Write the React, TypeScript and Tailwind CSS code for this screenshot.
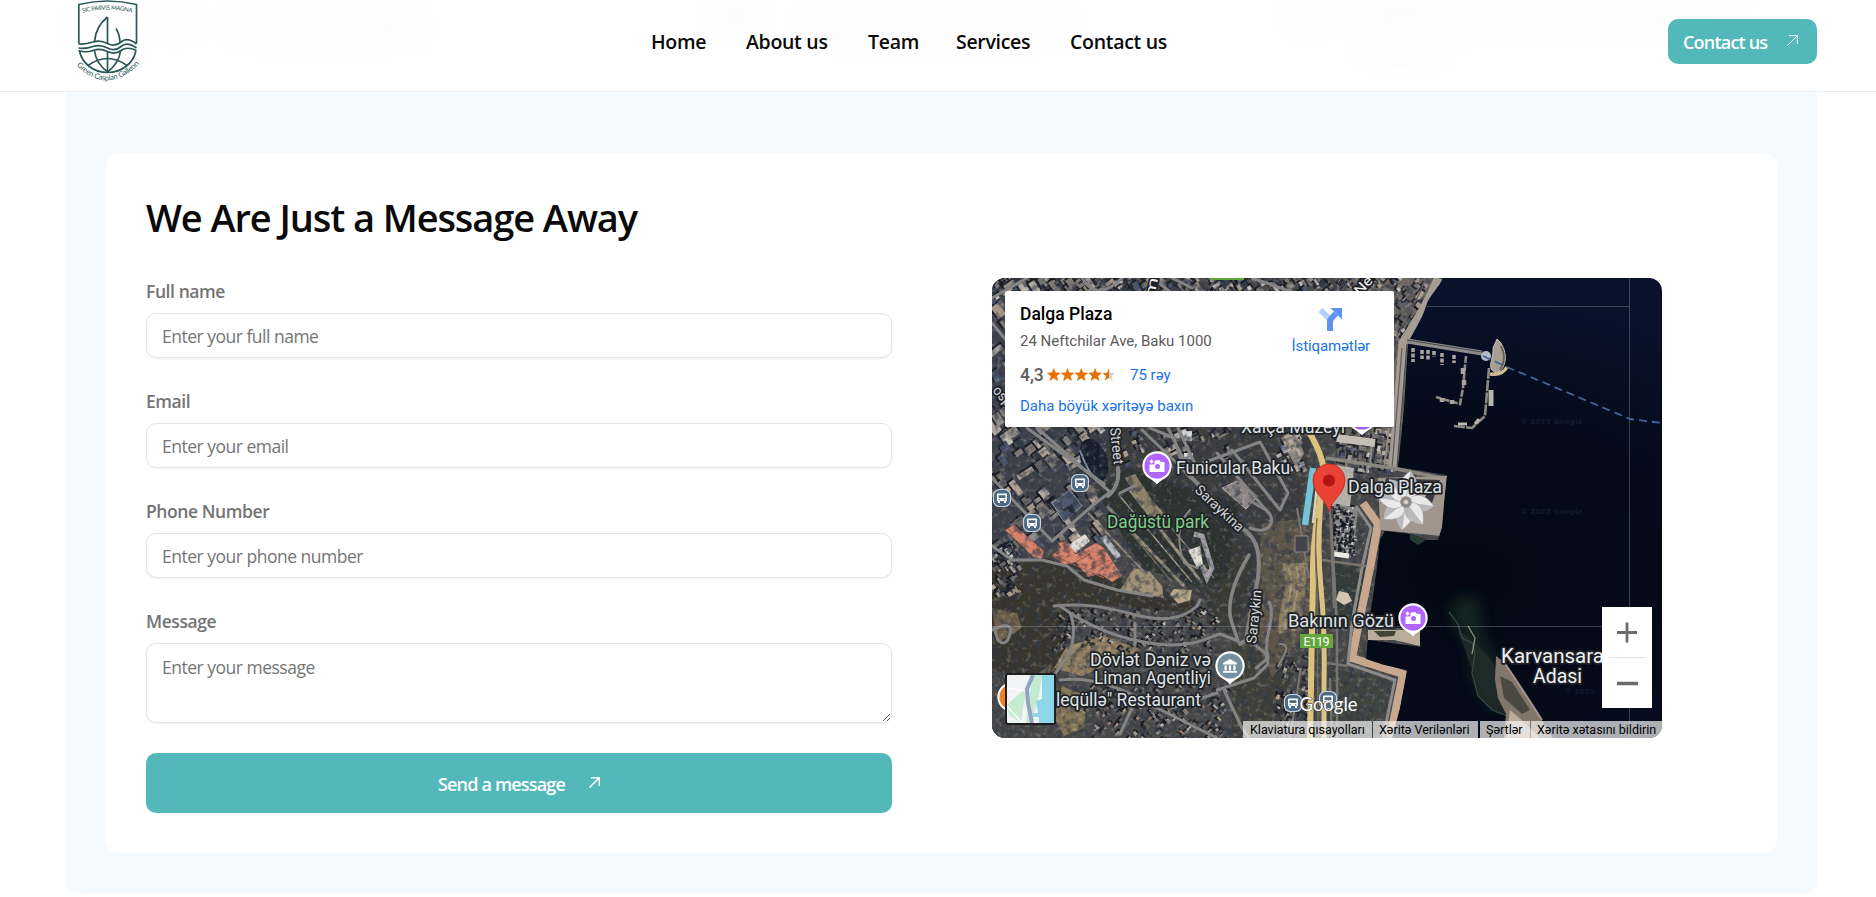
import React from "react";

const FONT = "font-['Open_Sans','Noto_Sans',sans-serif]";

function seeded(seed: number) {
  let s = seed;
  return () => {
    s = (s * 1664525 + 1013904223) % 4294967296;
    return s / 4294967296;
  };
}

type Block = { x: number; y: number; w: number; h: number; r: number; c: string };

const ROOFS = ["#a8a099", "#8d8780", "#cbc2b8", "#6f6c6c", "#b9aa9a", "#566078", "#ded8d2", "#7d7470", "#3c404e", "#938a7e", "#c9b7a5"];
const HOUSES = ["#9a938c", "#b8a892", "#7c746a", "#c9c3bb", "#b08a78", "#8b8678", "#6b6860"];

function makeBlocks(seed: number, n: number, x0: number, y0: number, x1: number, y1: number, min: number, max: number, angle: number, colors: string[]): Block[] {
  const rnd = seeded(seed);
  return Array.from({ length: n }, () => ({
    x: x0 + rnd() * (x1 - x0),
    y: y0 + rnd() * (y1 - y0),
    w: min + rnd() * (max - min),
    h: min * 0.7 + rnd() * (max - min) * 0.5,
    r: angle + (rnd() > 0.7 ? 90 : 0) + rnd() * 8,
    c: colors[Math.floor(rnd() * colors.length)],
  }));
}

const CITY = makeBlocks(7, 260, -5, -5, 330, 20, 3, 13, 50, ROOFS);
const CITY_WEST = makeBlocks(11, 170, -8, 15, 110, 262, 5, 18, 50, ROOFS);
const CITY_MID = makeBlocks(13, 34, 120, 150, 240, 185, 3, 11, 62, ROOFS);
const CITY_TOP = makeBlocks(19, 150, 330, -5, 440, 60, 3, 9, 35, ROOFS);
const EAST = makeBlocks(43, 70, 345, 150, 400, 190, 3, 9, 5, ROOFS);
const COAST_ROW = makeBlocks(47, 26, 290, 155, 312, 190, 4, 9, 60, ["#cfc2b0", "#e0d8cc", "#8c97ae", "#b9ab99"]);
const SLOPE = makeBlocks(23, 170, 62, 330, 225, 372, 2, 5, 30, HOUSES);
const SOUTH = makeBlocks(31, 110, 90, 405, 240, 460, 2, 7, 40, HOUSES);
const SOUTH_EAST = makeBlocks(33, 60, 285, 372, 318, 460, 2, 7, 20, ROOFS);
const WEST = makeBlocks(37, 60, 0, 262, 28, 315, 3, 8, 50, ROOFS);
const CAR_PARK = makeBlocks(51, 110, 343, 228, 363, 276, 1.5, 3.5, 5, ["#d8d8d6", "#55585c", "#b9b9b9", "#777"]);

function Blocks({ items }: { items: Block[] }) {
  return (
    <g>
      {items.map((b, i) => (
        <g key={i} transform={`translate(${b.x.toFixed(1)} ${b.y.toFixed(1)}) rotate(${b.r.toFixed(0)})`}>
          <rect x={-2} y={0} width={b.w} height={b.h + 2} fill="#12141d" opacity={0.8} />
          <rect width={b.w} height={b.h} fill={b.c} opacity={0.85} />
        </g>
      ))}
    </g>
  );
}

function BusStop({ x, y }: { x: number; y: number }) {
  return (
    <g transform={`translate(${x} ${y})`}>
      <rect x={-8.5} y={-8.5} width={17} height={17} rx={6} fill="#4d6a82" stroke="#c7d3dc" strokeWidth={1.2} />
      <path d="M-4 -4.5h8a1 1 0 0 1 1 1v6.5h-1v2h-2v-2h-4v2h-2v-2h-1v-6.500a1 1 0 0 1 1 -1z" fill="#fff" />
      <rect x={-3.4} y={-2.8} width={6.8} height={2.8} fill="#4d6a82" />
      <rect x={-3.4} y={1.2} width={1.5} height={1.1} fill="#4d6a82" />
      <rect x={1.9} y={1.2} width={1.5} height={1.1} fill="#4d6a82" />
    </g>
  );
}

function Marker({ x, y, color, children }: { x: number; y: number; color: string; children?: React.ReactNode }) {
  return (
    <g transform={`translate(${x} ${y})`}>
      <path d="M0 18.500C-3 15 -5 14.500 -9 11.500A14.700 14.700 0 1 1 9 11.500C5 14.500 3 15 0 18.500Z" fill="#fff" />
      <circle r={12.6} fill={color} />
      {children}
    </g>
  );
}

function Camera() {
  return (
    <g>
      <path d="M-7.500 -1.500V6h15V-4H4L2.800 -5.700H-1.500L-2.500 -4v2.500z" fill="#fff" />
      <circle cx={0.5} cy={0.6} r={2.5} fill="#b066ff" />
      <path d="M-5.500 -6.500v4M-7.500 -4.500h4" stroke="#fff" strokeWidth={1.4} />
    </g>
  );
}

type LabelProps = { x: number; y: number; w: number; size?: number; fill?: string; transform?: string; children: string };
function Label({ x, y, w, size = 17.5, fill = "#dfe2e5", transform, children }: LabelProps) {
  return (
    <text x={x} y={y} textLength={w} lengthAdjust="spacingAndGlyphs" fontSize={size} fill={fill} stroke="#202226" strokeWidth={3.6} strokeLinejoin="round" paintOrder="stroke" transform={transform}>
      {children}
    </text>
  );
}

const LAND =
  "M0 0H451C447 10 437 17 434 28C430 40 424 50 416 64L412 130L406 189L455 197L452 225L450 249L446 262L434 262L418 256L393 253L388 262L385 290L381 320L376 349L428 350L428 369L376 362L374 381L392 387L415 392L408 430L400 460H0Z";

function SatelliteMap() {
  return (
    <svg className="block h-full w-full font-[Roboto,sans-serif]" viewBox="0 0 670 460" aria-hidden="true">
      <defs>
        <radialGradient id="sea" cx="0.7" cy="0.65" r="0.6">
          <stop offset="0" stopColor="#030814" />
          <stop offset="0.6" stopColor="#050b1a" />
          <stop offset="1" stopColor="#09112b" />
        </radialGradient>
        <clipPath id="landClip">
          <path d={LAND} />
        </clipPath>
        <filter id="grain" x="0" y="0" width="100%" height="100%">
          <feTurbulence type="fractalNoise" baseFrequency="0.14" numOctaves="4" seed="4" />
          <feColorMatrix values="0 0 0 0 0.03  0 0 0 0 0.04  0 0 0 0 0.06  4 0 0 0 -1.800" />
        </filter>
        <filter id="dust" x="0" y="0" width="100%" height="100%">
          <feTurbulence type="fractalNoise" baseFrequency="0.2" numOctaves="3" seed="21" />
          <feColorMatrix values="0 0 0 0 0.72  0 0 0 0 0.68  0 0 0 0 0.6  0 3 0 0 -1.650" />
        </filter>
        <filter id="soft"><feGaussianBlur stdDeviation="0.5" /></filter>
        <filter id="haze"><feGaussianBlur stdDeviation="7" /></filter>
      </defs>
      <rect width="670" height="460" fill="url(#sea)" />

      <g clipPath="url(#landClip)">
        <g filter="url(#soft)">
          <path d={LAND} fill="#494849" />
          <path d="M0 0H130V220L60 270L0 290Z" fill="#3f424c" />
          <path d="M345 0H440V60L405 190H345Z" fill="#6d6862" />
          <path d="M120 150L320 152L305 260L275 330L250 340L200 315L100 210Z" fill="#3d3d3d" />
          <path d="M0 290L55 280L200 320L210 335L80 325L75 365L60 420L0 390Z" fill="#38362f" />
          <path d="M215 255L262 275L245 360L215 345Z" fill="#3b3a35" />
          <path d="M240 365L305 380L285 460H240Z" fill="#403f39" />
          <path d="M270 245L322 240L318 345L280 400L262 350Z" fill="#5d564a" />
          <path d="M290 285C300 310 283 335 287 356L309 352L316 285Z" fill="#8a7b62" />
          <path d="M296 290C306 310 289 335 294 352M304 288C312 310 296 335 301 352" stroke="#a8967a" strokeWidth="1.500" fill="none" />
          <path d="M75 368L112 358L150 372L90 398L62 390Z" fill="#93805f" />
          <path d="M0 330L25 335L30 350L5 365ZM60 385L40 400L55 410Z" fill="#6d6048" />
          <path d="M70 408L95 418L92 450L72 458L62 440Z" fill="#857656" />
          <path d="M342 285L373 290L366 348L348 348Z" fill="#363c37" />
          <path d="M338 390L398 402L384 460H335Z" fill="#41443f" />

          <Blocks items={CITY} />
          <Blocks items={CITY_WEST} />
          <Blocks items={CITY_MID} />
          <Blocks items={CITY_TOP} />
          <Blocks items={EAST} />
          <Blocks items={COAST_ROW} />
          <Blocks items={SLOPE} />
          <Blocks items={SOUTH} />
          <Blocks items={SOUTH_EAST} />
          <Blocks items={WEST} />

          <path d="M105 215L135 190L246 225L235 300L205 308L150 290Z" fill="#2f322f" />
          <g fill="none" stroke="#958b7c" strokeWidth="3">
            <path d="M115 228L192 308" /><path d="M138 212L210 305" /><path d="M147 212L222 300" strokeWidth="1.500" />
            <path d="M96 235L158 300" strokeWidth="2" />
            <path d="M126 216L200 304" stroke="#b3a994" strokeWidth="1.300" />
            <path d="M120 232L180 304" stroke="#6f7062" strokeWidth="1.300" />
          </g>
          <path d="M133 200L143 196L160 222L176 240L168 246L148 226Z" fill="#8d8268" />
          <path d="M142 290L158 294L170 308L172 320L150 316L128 312Z" fill="#a39277" />
          <path d="M178 316L182 311L200 312L198 322L186 326Z" fill="#b9a786" />
          <g fill="#d9826a">
            <path d="M13 252L22 247L52 273L49 281L42 279Z" />
            <path d="M60 277L70 269L84 276L104 265L112 270L130 298L120 304L108 296L96 299L84 284L72 287Z" />
            <path d="M66 265L74 263L84 274L74 278Z" />
          </g>
          <path d="M60 277L112 300M84 284L98 276M96 292L118 282" stroke="#a8614f" strokeWidth="1.300" />
          <path d="M77 267L93 256L98 263L84 275Z" fill="#e3dfd6" />
          <path d="M108 260L114 257L129 278L124 281Z" fill="#b9bbc0" />
          <path d="M60 225L78 212L90 228L72 244Z" fill="#4e586e" stroke="#8f949e" />
          <path d="M70 232L80 226L84 236Z" fill="#202637" />
          <path d="M196 272L208 268L211 286L205 290Z" fill="#dfdbd5" />
          <path d="M202 256L210 258L220 290L215 300L210 288" fill="none" stroke="#a2a0a4" strokeWidth="5" />
          <ellipse cx="102" cy="182" rx="13" ry="22" fill="#171c2b" transform="rotate(-20 102 182)" />
          <path d="M88 172Q96 196 106 202" stroke="#8793a8" strokeWidth="2" fill="none" />
          <path d="M230 210L245 203L266 218L254 231Z" fill="#8e8687" stroke="#b9b2aa" />
          <path d="M191 153h9v10h-9zM192 175h9v6h-9z" fill="#d6d5d8" />
          <path d="M289 160L304 155L312 175L304 190Z" fill="#b5aba0" opacity="0.7" />
        </g>

        <rect width="455" height="460" filter="url(#grain)" opacity="0.6" />
        <rect width="455" height="460" filter="url(#dust)" opacity="0.3" />

        <g fill="none" stroke="#858484" strokeLinejoin="round" strokeLinecap="round" filter="url(#soft)">
          <g strokeWidth="3">
            <path d="M35 150L112 206" /><path d="M45 150L118 214L100 228L60 263L0 200" />
            <path d="M126 190Q128 208 116 218" strokeWidth="4" /><path d="M128 215L142 208" />
            <path d="M0 268L20 282H50L75 288L92 302L125 312L160 318" />
            <path d="M62 328C90 325 110 328 140 336S190 342 205 328L208 322" />
            <path d="M68 328C98 350 130 362 165 366S215 360 228 356L246 363" />
            <path d="M78 335Q85 350 78 375L60 400" /><path d="M143 345V367" />
            <path d="M257 277C240 305 234 330 240 345L246 363" strokeWidth="3.500" />
            <path d="M192 192L250 250C268 262 268 280 266 300L258 340L254 362L248 366" strokeWidth="4" />
            <path d="M258 250C278 258 286 242 274 232L262 225" />
            <path d="M262 366L274 376L276 386L262 400L225 412" /><path d="M232 412L250 450L257 460" />
            <path d="M68 402C100 398 130 410 155 425L225 460" /><path d="M140 430L128 456M180 430L225 415" />
            <path d="M277 324C285 340 270 360 276 380L264 390" />
            <path d="M288 366C300 366 292 378 286 388" strokeWidth="2" />
            <path d="M150 152L192 192M158 150L182 160L192 192" />
            <path d="M192 192L268 164L296 215L288 232M225 175L274 232M240 172L288 232" />
            <path d="M176 150L196 190M186 150L204 188" />
            <path d="M0 352Q22 342 18 356T6 362L2 350" />
            <path d="M198 232Q180 250 192 285L206 290" strokeWidth="2" />
          </g>
          <path d="M90 0Q105 25 130 0M0 45L70 130M160 0L180 15M35 0L0 20M180 0L200 10M260 0L300 14" strokeWidth="3" />
        </g>

        <path d="M321 190L313 247" stroke="#72c4d6" strokeWidth="6.500" fill="none" />
        <path d="M327 190L321 245" stroke="#d8d2c8" strokeWidth="2.500" fill="none" />
        <path d="M330 185L362 190L358 228H340Z" fill="#c6c2ba" opacity="0.85" />
        <path d="M397 150L392 190M404 140L396 190M380 160L378 190" stroke="#8f8b86" strokeWidth="2" fill="none" />
        <path d="M446 0C440 18 428 38 411 65L401 190" stroke="#a59c92" strokeWidth="9" fill="none" />
        <path d="M434 0C428 18 416 36 404 60M410 70L400 190" stroke="#5c5c60" strokeWidth="1.200" fill="none" />
        <path d="M415 66L405 190" stroke="#4a4a50" strokeWidth="1.200" fill="none" />
        <path d="M334 180L400 190L450 200" stroke="#8a8680" strokeWidth="3.500" fill="none" />
        <path d="M345 160L383 165" stroke="#c4beb6" strokeWidth="8" />
        <path d="M342 226L366 230L361 280L342 274Z" fill="#868686" />
        <Blocks items={CAR_PARK} />
        <path d="M342 276L357 278" stroke="#eceae5" strokeWidth="5" />
        <path d="M371 225L386 246L379 285L368 340L360 380L411 396L398 460" stroke="#c7a88e" strokeWidth="8" fill="none" />
        <path d="M364 228L379 250L371 285L360 345L356 386L403 402L391 460" stroke="#8e8c88" strokeWidth="3" fill="none" />
        <path d="M376 352H428V368L402 362H376Z" fill="#b9ac9b" />
        <path d="M382 353L404 353L402 358L388 359Z" fill="#414438" />
        <path d="M330 282L374 288M335 385L356 388M339 240L345 350V460" stroke="#77736d" strokeWidth="2.500" fill="none" />
        <path d="M347 313l9 2 4 8-8 4-8-5z" fill="#d2c5b2" />

        <path d="M386 200L455 198L450 258L388 252Z" fill="#a0968d" />
        <path d="M394 200L448 202L440 225L390 222Z" fill="#383b44" />
        <path d="M302 110L316 152Q331 178 331 190L328 222Q320 270 321 300L318 460" stroke="#dcc27d" strokeWidth="6" fill="none" />
        <path d="M329 222Q325 270 329 310T332 405V460" stroke="#dac382" strokeWidth="5" fill="none" />
        <path d="M325 240Q322 270 325 310L326 460" stroke="#746d5e" strokeWidth="1.400" fill="none" />
        <path d="M305 230L317 300M309 390L298 460M338 230L342 330M338 400L340 460" stroke="#7a766f" strokeWidth="2" fill="none" />
        <path d="M303 258h13v16h-13z" fill="#43444c" stroke="#8b8880" />
        <g stroke="#8f8d8b" strokeWidth="0.500" transform="translate(414 224)">
          {[0, 45, 90, 135, 180, 225, 270, 315].map((a) => (
            <g key={a} transform={`rotate(${a + 8}) scale(${a === 180 ? 0.95 : 0.85})`}>
              <path d="M0 0C10 6 16 18 0 33C-16 18 -10 6 0 0Z" fill="#e9e9ea" />
              <path d="M0 0C-10 6 -16 18 0 33Z" fill="#b9b8ba" stroke="none" />
            </g>
          ))}
          <circle r="5.500" fill="#8c8984" />
          <circle r="2.500" fill="#d9d3c8" />
        </g>
      </g>

      <g fill="none" filter="url(#soft)">
        <path d="M415 63L490 75" stroke="#8d8c8c" strokeWidth="5" />
        <path d="M415 62L490 74" stroke="#34363f" strokeWidth="0.800" />
        <path d="M474 78L471 110L468 126L444 119" stroke="#8d8a84" strokeWidth="2.600" strokeDasharray="7 1.500" />
        <path d="M471 90v6M472 102v5M450 120v4M460 122v4" stroke="#aaa59c" strokeWidth="4.500" />
        <path d="M497 90L493 138L480 150L462 148" stroke="#8d8a84" strokeWidth="2.600" strokeDasharray="11 1.200" />
        <path d="M421 70v14M430 72v9M436 72v10M442 73v6M450 75v12M462 77v8" stroke="#aaa69e" strokeWidth="3.500" strokeDasharray="4 1.500" />
        <path d="M499 112v16" stroke="#b8b4ae" strokeWidth="5" />
        <path d="M466 146h9M483 146l4-5" stroke="#bdb7ad" strokeWidth="3" />
        <path d="M505 61C516 70 516 90 505 95C493 92 502 80 501 70Z" fill="#a79f91" stroke="#c3beb3" />
        <path d="M509 68C514 78 512 86 508 92" stroke="#66625b" strokeWidth="2" />
      </g>
      <path d="M498 96Q510 98 515 89" stroke="#cdb994" strokeWidth="3.500" fill="none" />
      <circle cx="494" cy="78" r="5" fill="#b5bac5" />

      <path d="M456 332L470 318L486 320L492 360L506 385L510 432L494 424L480 400L478 370L464 350Z" fill="#172a22" opacity="0.85" filter="url(#haze)" />
      <path d="M466 352L483 365L498 380L508 400L514 438L500 432L486 418L481 395Z" fill="#222f29" opacity="0.8" filter="url(#soft)" />
      <path d="M457 334L466 346L470 360L480 365L483 376L480 395L486 418L500 432L515 438" stroke="#354a42" strokeWidth="1.300" fill="none" />
      <path d="M476 348L483 360L480 376" stroke="#879184" strokeWidth="1.300" fill="none" />
      <g filter="url(#soft)">
        <path d="M504 378L512 384L530 411L546 436L561 460H512L514 436L506 420L503 402Z" fill="#82756a" />
        <path d="M508 398L520 404L538 432L530 436L512 420Z" fill="#494840" />
        <path d="M518 432L532 444L548 460H514Z" fill="#bdab9b" />
        <path d="M512 384L530 411L550 442" stroke="#a3958a" strokeWidth="2" fill="none" />
      </g>
      <path d="M418 256L434 262L426 267L418 262Z" fill="#273a33" filter="url(#soft)" />

      <path d="M637.500 0V460M435 28.500H637.500M0 348.500H612" stroke="#c3cad4" strokeOpacity="0.28" fill="none" />
      <path d="M491 78L515 89L638 141L670 145" stroke="#46639e" strokeWidth="1.800" strokeDasharray="8 5" fill="none" />
      <g fontSize="8" fill="#131d31" fontWeight="700" letterSpacing="0.600">
        <text x="529" y="146">© 2025 Google</text>
        <text x="529" y="236">© 2025 Google</text>
        <text x="573" y="416">© 2025</text>
      </g>

      <rect x="218" y="-2" width="34" height="4" fill="#62a63c" />
      <Label x={249} y={155} w={104}>Xalça Muzeyi</Label>
      <Marker x={370} y={139} color="#b066ff" />
      <Label x={0} y={0} w={37} size={14.5} fill="#d4d6d8" transform="translate(118 150) rotate(84)">Street</Label>
      <Label x={0} y={0} w={20} size={14} fill="#f0f0f0" transform="translate(162 20) rotate(-78)">m</Label>
      <Label x={0} y={0} w={20} size={14} fill="#f0f0f0" transform="translate(368 18) rotate(-47)">Ne</Label>
      <Label x={0} y={0} w={22} size={14} fill="#d4d6d8" transform="translate(0 113) rotate(48)">osp</Label>
      <Label x={184} y={196} w={114}>Funicular Baku</Label>
      <Marker x={165} y={188} color="#b066ff"><Camera /></Marker>
      <Label x={0} y={0} w={61} size={14} fill="#d4d6d8" transform="translate(202 213) rotate(43)">Saraykina</Label>
      <Label x={0} y={0} w={54} size={14} fill="#d4d6d8" transform="translate(264 366) rotate(-84)">Saraykin</Label>
      <Label x={115} y={250} w={102} fill="#7fd087">Dağüstü park</Label>
      <Label x={356} y={215} w={94}>Dalga Plaza</Label>
      <Label x={296} y={348.5} w={106}>Bakının Gözü</Label>
      <Marker x={421} y={340} color="#b066ff"><Camera /></Marker>
      <Label x={98} y={388} w={121}>Dövlət Dəniz və</Label>
      <Label x={102} y={405.5} w={117}>Liman Agentliyi</Label>
      <Marker x={238} y={388} color="#75909e">
        <path d="M0 -7L-7 -3V-1.500H7V-3ZM-5.500 -0.500h2.200v5h-2.200zM-1.100 -0.500h2.200v5h-2.200zM3.300 -0.500h2.200v5h-2.200zM-7 5H7v1.800H-7z" fill="#fff" />
      </Marker>
      <Marker x={20} y={419} color="#f57c22" />
      <Label x={64} y={428} w={145}>{"leqüllə\" Restaurant"}</Label>
      <Label x={509} y={385} w={103} size={21} fill="#eef1f4">Karvansara</Label>
      <Label x={541} y={405} w={49} size={21} fill="#eef1f4">Adasi</Label>
      <rect x="308" y="356" width="33" height="14" fill="#62a63c" />
      <text x="311.500" y="367.500" fontSize="12.500" textLength="26" fill="#fff">E119</text>
      <BusStop x={88} y={205} />
      <BusStop x={10} y={220} />
      <BusStop x={40} y={245} />
      <BusStop x={301} y={425} />
      <BusStop x={336} y={422} />
      <text x="307.500" y="433" fontSize="19.500" textLength="58" lengthAdjust="spacingAndGlyphs" fill="#fff" className="font-[Lato,sans-serif]" stroke="#444" strokeWidth="1" paintOrder="stroke">Google</text>

      <path d="M337 234C335 222 321 216 321 202A16 16 0 0 1 353 202C353 216 339 222 337 234Z" fill="#ea4335" stroke="#c5221f" strokeWidth="0.800" />
      <circle cx="337" cy="202.500" r="6" fill="#b31412" />
    </svg>
  );
}

const STAR = "M6.800 0.500L8.500 4.800L13.200 5.100L9.600 8.100L10.800 12.600L6.800 10.100L2.800 12.600L4 8.100L0.400 5.100L5.100 4.800Z";

function PlaceCard() {
  return (
    <div className="absolute left-[13px] top-[13px] flex h-[136px] w-[389px] justify-between rounded-[2px] bg-white pl-[15px] pr-6 pt-[11px] text-[15px] shadow-sm">
      <div>
        <h2 className="text-[17.5px]/[24px] font-medium text-black">Dalga Plaza</h2>
        <p className="mt-[6px] leading-[18px] text-[#5b5b5b]">24 Neftchilar Ave, Baku 1000</p>
        <div className="mt-[13px] flex items-center leading-[22px]">
          <span className="w-[27px] text-[17.5px] font-medium text-[#5b5b5b]">4,3</span>
          <svg className="h-[14px] w-[69px]" viewBox="0 0 69 14">
            <defs>
              <linearGradient id="half"><stop offset="0.5" stopColor="#e57200" /><stop offset="0.5" stopColor="#cfcfcf" /></linearGradient>
            </defs>
            {[0, 1, 2, 3, 4].map((i) => (
              <path key={i} d={STAR} transform={`translate(${i * 13.75} 0)`} fill={i === 4 ? "url(#half)" : "#e57200"} stroke={i === 4 ? "none" : "#e57200"} strokeWidth={0.5} />
            ))}
          </svg>
          <span className="ml-[14px] pt-px text-[#1a73e8]">75 rəy</span>
        </div>
        <a className="mt-[11px] block leading-[18px] text-[#1a73e8]">Daha böyük xəritəyə baxın</a>
      </div>
      <div className="flex flex-col items-center pt-[6px]">
        <svg className="h-[23px] w-[23px]" viewBox="0 0 23 23">
          <path d="M1.500 2L11.500 12" stroke="#b5d0fb" strokeWidth="5.500" />
          <path d="M11 23V14Q11 11.500 13 9.500L17 5.500" fill="none" stroke="#5e93f5" strokeWidth="6" />
          <path d="M11.500 0H23V11.500Z" fill="#5e93f5" />
        </svg>
        <span className="mt-[6px] leading-[18px] tracking-[-0.1px] text-[#1a73e8]">İstiqamətlər</span>
      </div>
    </div>
  );
}

function MapPanel() {
  return (
    <div className="relative h-[460px] w-[670px] overflow-hidden rounded-[13px] font-[Roboto,sans-serif]">
      <SatelliteMap />
      <PlaceCard />
      <div className="absolute bottom-[13px] left-[13px] h-[52px] w-[51px] overflow-hidden rounded-[3px] border-2 border-[#1e1e1e]">
        <svg className="h-full w-full" viewBox="0 0 47 48">
          <rect width="47" height="48" fill="#f1f3f4" />
          <path d="M0 30L20 12L16 32L14 48L2 40Z" fill="#c5ecd1" />
          <path d="M26 0H35L32 20L24 48H19L22 24Z" fill="#c2ead0" />
          <path d="M35 0H47V48H32V42H26V38H31L29 26L35 24Z" fill="#8ed7ea" />
          <path d="M0 13L20 16M0 31L15 48" stroke="#fff" strokeWidth="1.500" />
          <path d="M26 0L20 14L21 28L25 48" fill="none" stroke="#93a2c1" strokeWidth="4" />
        </svg>
      </div>
      <div className="absolute bottom-[30px] right-[10px] flex h-[101px] w-[50px] flex-col items-center justify-center bg-white">
        <svg className="h-[50px] w-[50px]" viewBox="0 0 50 50"><path d="M15 25.500H35M25 15.500V35.500" stroke="#6b6b6b" strokeWidth="2.800" /></svg>
        <div className="h-px w-[37px] bg-[#e3e3e3]" />
        <svg className="h-[50px] w-[50px]" viewBox="0 0 50 50"><path d="M15 25.500H36" stroke="#6b6b6b" strokeWidth="3.400" /></svg>
      </div>
      <div className="absolute bottom-0 right-0 flex h-[17px] text-[12.5px]/[17px] text-black">
        <span className="w-[129px] bg-[#f5f5f5]/70 pl-[7px] whitespace-nowrap">Klaviatura qısayolları</span>
        <span className="ml-px w-[105px] bg-[#f5f5f5]/70 pl-[6px] whitespace-nowrap">Xəritə Verilənləri</span>
        <span className="ml-[2px] w-[50px] bg-[#f5f5f5]/70 pl-[6px] whitespace-nowrap">Şərtlər</span>
        <span className="ml-px w-[131px] bg-[#f5f5f5]/70 pl-[6px] whitespace-nowrap">Xəritə xətasını bildirin</span>
      </div>
    </div>
  );
}

function Logo() {
  return (
    <svg className="h-[86px] w-[74px]" viewBox="70 0 74 86" fill="none" stroke="#2b5558" strokeWidth="1.700" strokeLinejoin="round">
      <path d="M78.800 43.500V4.500Q107.500 -2.500 136.500 4.500V43.500" />
      <path d="M78.500 44Q86 44.500 93 42T107.500 43.500T121 42T136.500 44" />
      <path d="M78.500 48Q86 49 93 46.500T107.500 48T121 46.500T136.500 48" />
      <path d="M78.500 50.500Q86 53 93 50.500T107.500 51.500T121 50.500T136.500 50.500" />
      <path d="M79.500 51C82 63 93 72.500 107.500 72.500S133.500 63 135.800 51" />
      <path d="M107.500 17V43M107.500 52V72M107.500 17Q96 26 94.500 41.500M116 28.500Q119.500 34 120 42" />
      <path d="M94.500 51Q96 63 107.500 72Q119 63 120.500 51M88 65.500Q107.500 51.500 127 65.500" />
      <path id="mottoTop" d="M82.500 12.800Q107.500 6.500 133 12.800" stroke="none" />
      <path id="mottoBottom" d="M76.500 65.500Q107.500 96 139 64" stroke="none" />
      <g stroke="none" fill="#2b5558" className="font-[Lato,sans-serif]">
        <text fontSize="6"><textPath href="#mottoTop" textLength="50">SIC PARVIS MAGNA</textPath></text>
        <text fontSize="7.500"><textPath href="#mottoBottom" textLength="72">Green Caspian Galleon</textPath></text>
      </g>
    </svg>
  );
}

function ArrowUpRight({ className, weight }: { className: string; weight: number }) {
  return (
    <svg className={className} viewBox="0 0 11 11" fill="none" stroke="#fff" strokeWidth={weight}>
      <path d="M2 0.700H10.300V9M10.300 0.700L0.500 10.500" />
    </svg>
  );
}

const NAV = [
  { label: "Home", box: "w-[55px]" },
  { label: "About us", box: "w-[82px]" },
  { label: "Team", box: "w-[48px]" },
  { label: "Services", box: "w-[74px]" },
  { label: "Contact us", box: "w-[96px]" },
];

function Header() {
  return (
    <header className="relative flex h-[92px] shrink-0 items-start justify-between overflow-hidden border-b border-[#e8ebf1] bg-white pl-[70px] pr-[59px]">
      <div className="absolute left-[155px] top-[2px] h-[36px] w-[40px] rounded-full bg-[#fcfcfc] blur-md" />
      <div className="absolute left-[230px] top-[16px] h-[22px] w-[190px] rounded-full bg-[#fafafa] blur-md" />
      <div className="absolute left-[715px] top-[-4px] h-[36px] w-[42px] rounded-full bg-[#fafafa] blur-md" />
      <div className="absolute left-[800px] top-[16px] h-[20px] w-[270px] rounded-full bg-[#fafafa] blur-md" />
      <div className="absolute left-[1290px] top-[-4px] h-[34px] w-[32px] rounded-full bg-[#fafafa] blur-md" />
      <div className="absolute left-[1360px] top-[2px] h-[22px] w-[380px] rounded-full bg-[#fafafa] blur-md" />
      <div className="absolute left-[1358px] top-[36px] h-[22px] w-[86px] rounded-full bg-[#fbfbfb] blur-md" />
      <Logo />
      <nav className="relative -mr-[5px] mt-[28px] flex gap-10 whitespace-nowrap text-[19.5px]/[28px] font-semibold tracking-[-0.3px] text-[#0a0a0a]">
        {NAV.map((n) => (
          <a key={n.label} className={n.box}>{n.label}</a>
        ))}
      </nav>
      <button className="relative mt-[19px] flex h-[45px] w-[149px] items-center rounded-[10px] bg-[#53b8b9] pl-[15px] text-[18px] font-semibold tracking-[-0.8px] text-white">
        <span className="w-[104px] pt-[2px] text-left">Contact us</span>
        <ArrowUpRight className="-mt-[2px] h-[11px] w-[11px]" weight={1} />
      </button>
    </header>
  );
}

const FIELDS = [
  { id: "name", label: "Full name", hint: "Enter your full name" },
  { id: "email", label: "Email", hint: "Enter your email" },
  { id: "phone", label: "Phone Number", hint: "Enter your phone number" },
];

const LABEL = "mb-[10px] block text-[17.5px]/[24px] font-semibold tracking-[-0.42px] text-[#747474]";
const INPUT = "block w-full rounded-[10px] border border-[#e5e5e5] bg-white px-[15px] text-[17.5px] tracking-[-0.5px] shadow-[0_1px_2px_rgba(0,0,0,0.06)] outline-none placeholder:text-[#757575]";

export default function App() {
  return (
    <div className={`flex h-[897px] flex-col overflow-hidden bg-white ${FONT}`}>
      <Header />
      <section className="ml-[66px] h-[801px] w-[1751px] shrink-0 rounded-b-[12px] bg-[#f4fafd] px-10 pt-[61px]">
        <div className="flex h-[700px] rounded-[13px] bg-white pl-10">
          <div className="w-[746px] shrink-0">
            <h1 className="mt-[37px] text-[38px]/[54px] font-semibold tracking-[-1.08px] text-[#0a0a0a] whitespace-nowrap">We Are Just a Message Away</h1>
            <form className="mt-[35px]">
              {FIELDS.map((f) => (
                <div key={f.id} className="mb-[31px]">
                  <label htmlFor={f.id} className={LABEL}>{f.label}</label>
                  <input id={f.id} placeholder={f.hint} className={`${INPUT} h-[45px]`} />
                </div>
              ))}
              <label htmlFor="message" className={LABEL}>Message</label>
              <textarea id="message" placeholder="Enter your message" className={`${INPUT} h-20 pt-[10px]`} />
              <button type="button" className="mt-[30px] flex h-[60px] w-full items-center justify-center gap-6 rounded-[10px] bg-[#53b8b9] text-[18px] font-semibold tracking-[-0.82px] text-white">
                <span className="pt-[2px]">Send a message</span>
                <ArrowUpRight className="mt-[-1px] h-[11px] w-[11px]" weight={1.5} />
              </button>
            </form>
          </div>
          <div className="ml-[100px] mt-[125px]">
            <MapPanel />
          </div>
        </div>
      </section>
    </div>
  );
}
